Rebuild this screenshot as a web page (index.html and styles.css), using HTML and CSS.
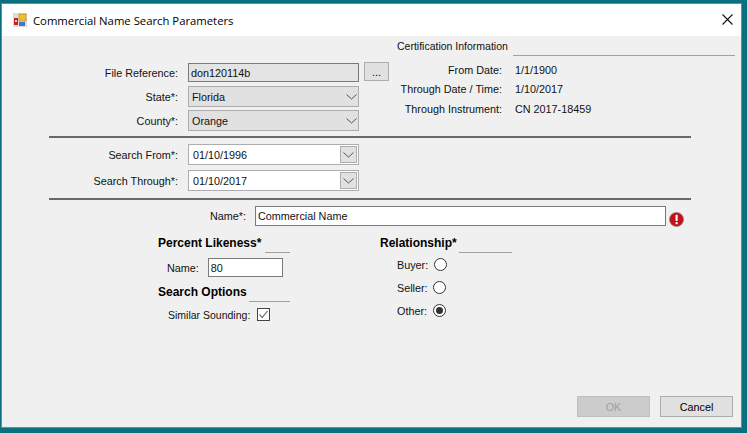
FILE: index.html
```html
<!DOCTYPE html>
<html>
<head>
  <title>Commercial Name Search Parameters</title>
  <link rel="stylesheet" href="styles.css">
</head>
<body>
  <div class="window">
    <div class="titlebar">
      <svg class="app-icon" width="14" height="14" viewBox="0 0 14 14">
        <rect x="0" y="0" width="14" height="14" fill="#dcdcdc"/>
        <rect x="1" y="5" width="4" height="7" fill="#c8201c"/>
        <rect x="2" y="7" width="2" height="2" fill="#f4c0b8"/>
        <rect x="6" y="1" width="7" height="7" fill="#f2bc2a" stroke="#b8902c" stroke-width="0.7"/>
        <rect x="6" y="9" width="6" height="4" fill="#3d78d8"/>
      </svg>
      <span class="title">Commercial Name Search Parameters</span>
      <svg class="close" width="11" height="11" viewBox="0 0 11 11">
        <path d="M0.5 0.5 L10.5 10.5 M10.5 0.5 L0.5 10.5" stroke="#111" stroke-width="1.1" fill="none"/>
      </svg>
    </div>

    <div class="content">
      <div class="top">
        <div class="top-left">
          <div class="field">
            <label class="field-label">File Reference:</label>
            <div class="readonly-box">don120114b</div>
            <button class="browse">...</button>
          </div>
          <div class="field state-row">
            <label class="field-label">State*:</label>
            <div class="combo">Florida
              <svg class="chevron" width="11" height="6" viewBox="0 0 11 6"><path d="M0.5 0.5 L5.5 5 L10.5 0.5" stroke="#555" fill="none"/></svg>
            </div>
          </div>
          <div class="field county-row">
            <label class="field-label">County*:</label>
            <div class="combo">Orange
              <svg class="chevron" width="11" height="6" viewBox="0 0 11 6"><path d="M0.5 0.5 L5.5 5 L10.5 0.5" stroke="#555" fill="none"/></svg>
            </div>
          </div>
        </div>

        <div class="cert">
          <div class="cert-head">
            <span class="cert-title">Certification Information</span>
            <div class="head-line cert-line"></div>
          </div>
          <div class="cert-row"><span class="cert-label">From Date:</span><span>1/1/1900</span></div>
          <div class="cert-row"><span class="cert-label">Through Date / Time:</span><span>1/10/2017</span></div>
          <div class="cert-row"><span class="cert-label">Through Instrument:</span><span>CN 2017-18459</span></div>
        </div>
      </div>

      <div class="separator"></div>

      <div class="dates">
        <div class="field">
          <label class="field-label">Search From*:</label>
          <div class="date-box">01/10/1996
            <span class="date-btn"><svg width="11" height="6" viewBox="0 0 11 6"><path d="M0.5 0.5 L5.5 5 L10.5 0.5" stroke="#555" fill="none"/></svg></span>
          </div>
        </div>
        <div class="field through-row">
          <label class="field-label">Search Through*:</label>
          <div class="date-box">01/10/2017
            <span class="date-btn"><svg width="11" height="6" viewBox="0 0 11 6"><path d="M0.5 0.5 L5.5 5 L10.5 0.5" stroke="#555" fill="none"/></svg></span>
          </div>
        </div>
      </div>

      <div class="separator sep-two"></div>

      <div class="name-row">
        <label class="name-label">Name*:</label>
        <div class="text-box name-box">Commercial Name</div>
        <svg class="error-icon" width="15" height="15" viewBox="0 0 16 16">
          <circle cx="8" cy="8" r="7.5" fill="#c4101a" stroke="#8a8a8a" stroke-width="0.8"/>
          <rect x="7" y="3" width="2.2" height="6.5" fill="#fff"/>
          <rect x="7" y="10.8" width="2.2" height="2.2" fill="#fff"/>
        </svg>
      </div>

      <div class="options">
        <div class="options-left">
          <div class="group-head">
            <span class="bold">Percent Likeness*</span>
            <div class="head-line likeness-line"></div>
          </div>
          <div class="likeness-row">
            <span>Name:</span>
            <div class="text-box likeness-box">80</div>
          </div>
          <div class="group-head search-head">
            <span class="bold">Search Options</span>
            <div class="head-line search-line"></div>
          </div>
          <div class="similar-row">
            <span class="similar-label">Similar Sounding:</span>
            <svg class="check" width="13" height="13" viewBox="0 0 13 13">
              <rect x="0.5" y="0.5" width="12" height="12" fill="#fff" stroke="#444"/>
              <path d="M2.5 6.5 L5.2 9.5 L10.5 3" stroke="#555" stroke-width="1.1" fill="none"/>
            </svg>
          </div>
        </div>

        <div class="options-right">
          <div class="group-head">
            <span class="bold">Relationship*</span>
            <div class="head-line relation-line"></div>
          </div>
          <div class="radio-row"><span class="radio-label buyer-label">Buyer:</span><span class="radio"></span></div>
          <div class="radio-row"><span class="radio-label">Seller:</span><span class="radio"></span></div>
          <div class="radio-row"><span class="radio-label">Other:</span><span class="radio checked"></span></div>
        </div>
      </div>

      <div class="buttons">
        <button class="btn btn-disabled">OK</button>
        <button class="btn">Cancel</button>
      </div>
    </div>
  </div>
</body>
</html>
```

FILE: styles.css
```css
html, body {
  margin: 0;
  height: 100%;
}

body {
  background-color: #0b6f80;
  padding: 3px 5px 5px 1px;
  box-sizing: border-box;
  font-family: "Liberation Sans", Arial, sans-serif;
  font-size: 10.8px;
  color: #111;
  overflow: hidden;
}

.window {
  height: 425px;
  box-sizing: border-box;
  border: 1px solid #3f9fb2;
  background-color: #f0f0f0;
  display: flex;
  flex-direction: column;
}

.titlebar {
  height: 32px;
  background-color: #fff;
  display: flex;
  align-items: center;
  padding: 0 8px 0 11px;
  flex: none;
}

.title {
  margin-left: 6px;
  font-family: "Open Sans", sans-serif;
  font-size: 11.3px;
  color: #000;
}

.close {
  margin-left: auto;
  margin-bottom: 2px;
}

.content {
  flex: 1;
  display: flex;
  flex-direction: column;
}

.top {
  display: flex;
  height: 100px;
}

.top-left {
  width: 395px;
  padding-top: 27px;
}

.field {
  display: flex;
  align-items: center;
}

.field-label {
  width: 176px;
  margin-right: 10px;
  text-align: right;
}

.state-row {
  margin-top: 4px;
}

.county-row {
  margin-top: 3px;
}

.through-row {
  margin-top: 5px;
}

.readonly-box {
  width: 171px;
  height: 19px;
  box-sizing: border-box;
  border: 1px solid #7a7a7a;
  background-color: #e4e4e4;
  padding: 3px 2px 0;
}

.browse {
  width: 25px;
  height: 19px;
  margin-left: 5px;
  align-self: flex-start;
  margin-top: -1px;
  border: 1px solid #adadad;
  background-color: #e1e1e1;
  font-family: inherit;
  font-size: 11px;
  padding: 0;
}

.combo {
  width: 171px;
  height: 21px;
  box-sizing: border-box;
  border: 1px solid #adadad;
  background-color: #e1e1e1;
  padding: 0 1px 0 3px;
  display: flex;
  align-items: center;
  justify-content: space-between;
}

.cert-head {
  display: flex;
  height: 20px;
  box-sizing: border-box;
  padding-top: 4px;
  margin-bottom: 4px;
}

.cert-title {
  font-size: 10.5px;
}

.head-line {
  height: 1px;
  background-color: #a0a0a0;
  align-self: flex-end;
}

.cert-line {
  width: 222px;
  margin-left: 5px;
}

.cert-row {
  display: flex;
  height: 19.5px;
  align-items: center;
}

.cert-label {
  width: 105px;
  margin-right: 13px;
  text-align: right;
}

.separator {
  height: 2px;
  width: 642px;
  margin-left: 47px;
  background-color: #696969;
}

.dates {
  padding-top: 6px;
}

.date-box {
  width: 171px;
  height: 21px;
  box-sizing: border-box;
  border: 1px solid #adadad;
  background-color: #fff;
  padding-left: 4px;
  display: flex;
  align-items: center;
  justify-content: space-between;
}

.date-btn {
  width: 17px;
  height: 17px;
  margin-right: 1px;
  border: 1px solid #adadad;
  background-color: #e1e1e1;
  box-sizing: border-box;
  display: flex;
  align-items: center;
  justify-content: center;
}

.sep-two {
  margin-top: 7px;
}

.name-row {
  display: flex;
  padding-top: 6px;
}

.name-label {
  width: 244px;
  margin-right: 9px;
  text-align: right;
  line-height: 20px;
}

.text-box {
  box-sizing: border-box;
  border: 1px solid #7a7a7a;
  background-color: #fff;
  padding: 3px 2px 0;
}

.name-box {
  width: 411px;
  height: 20px;
}

.error-icon {
  margin: 6px 0 0 3px;
}

.options {
  display: flex;
  padding-top: 9px;
}

.options-left {
  width: 222px;
  padding-left: 156px;
}

.group-head {
  display: flex;
  height: 17px;
}

.bold {
  font-size: 12px;
  font-weight: bold;
  color: #000;
}

.likeness-line {
  width: 25px;
  margin-left: 4px;
}

.search-line {
  width: 41px;
  margin-left: 2px;
}

.relation-line {
  width: 53px;
  margin-left: 2px;
}

.likeness-row {
  display: flex;
  align-items: center;
  padding: 5px 0 0 9px;
}

.likeness-box {
  width: 75px;
  height: 19px;
  margin-left: 9px;
}

.search-head {
  margin-top: 8px;
}

.similar-row {
  display: flex;
  align-items: center;
  padding: 6px 0 0 10px;
}

.similar-label {
  width: 81px;
  font-size: 10.5px;
  white-space: nowrap;
}

.check {
  margin-left: 8px;
}

.radio-row {
  display: flex;
  align-items: center;
  height: 23px;
  margin-left: 17px;
}

.radio-label {
  width: 36px;
}

.buyer-label {
  width: 37px;
}

.radio {
  width: 13px;
  height: 13px;
  box-sizing: border-box;
  border: 1px solid #333;
  border-radius: 50%;
  background-color: #fff;
  display: flex;
  align-items: center;
  justify-content: center;
}

.checked::after {
  content: "";
  width: 7px;
  height: 7px;
  border-radius: 50%;
  background-color: #333;
}

.buttons {
  margin-top: auto;
  display: flex;
  justify-content: flex-end;
  gap: 10px;
  padding: 0 8px 10px 0;
}

.btn {
  width: 73px;
  height: 21px;
  box-sizing: border-box;
  border: 1px solid #adadad;
  background-color: #e1e1e1;
  font-family: inherit;
  font-size: 10.8px;
  color: #000;
  padding: 0;
}

.btn-disabled {
  background-color: #ccc;
  border-color: #bfbfbf;
  color: #a0a0a0;
}
```
